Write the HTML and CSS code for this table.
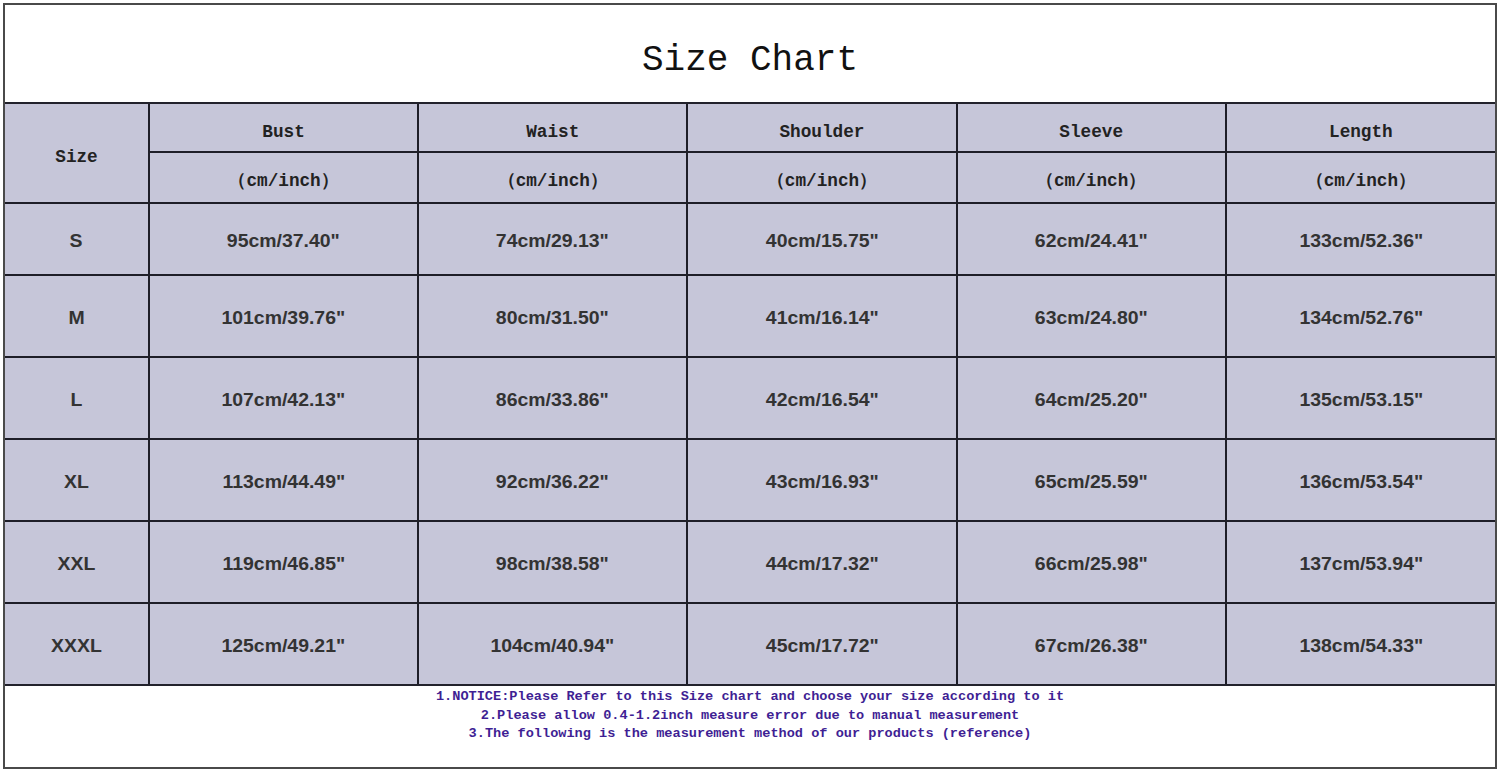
FILE: index.html
```html
<!DOCTYPE html>
<html>
<head>
<meta charset="utf-8">
<link rel="stylesheet" href="styles.css">
</head>
<body>
<div class="sheet">
  <div class="title">Size Chart</div>
  <table class="chart">
    <colgroup>
      <col class="c-size"><col><col><col><col><col>
    </colgroup>
    <thead>
      <tr class="h1">
        <th rowspan="2" class="size-head">Size</th>
        <th>Bust</th><th>Waist</th><th>Shoulder</th><th>Sleeve</th><th>Length</th>
      </tr>
      <tr class="h2">
        <th>（cm/inch）</th><th>（cm/inch）</th><th>（cm/inch）</th><th>（cm/inch）</th><th>（cm/inch）</th>
      </tr>
    </thead>
    <tbody>
      <tr class="r-first"><td><span>S</span></td><td><span>95cm/37.40"</span></td><td><span>74cm/29.13"</span></td><td><span>40cm/15.75"</span></td><td><span>62cm/24.41"</span></td><td><span>133cm/52.36"</span></td></tr>
      <tr><td><span>M</span></td><td><span>101cm/39.76"</span></td><td><span>80cm/31.50"</span></td><td><span>41cm/16.14"</span></td><td><span>63cm/24.80"</span></td><td><span>134cm/52.76"</span></td></tr>
      <tr><td><span>L</span></td><td><span>107cm/42.13"</span></td><td><span>86cm/33.86"</span></td><td><span>42cm/16.54"</span></td><td><span>64cm/25.20"</span></td><td><span>135cm/53.15"</span></td></tr>
      <tr><td><span>XL</span></td><td><span>113cm/44.49"</span></td><td><span>92cm/36.22"</span></td><td><span>43cm/16.93"</span></td><td><span>65cm/25.59"</span></td><td><span>136cm/53.54"</span></td></tr>
      <tr><td><span>XXL</span></td><td><span>119cm/46.85"</span></td><td><span>98cm/38.58"</span></td><td><span>44cm/17.32"</span></td><td><span>66cm/25.98"</span></td><td><span>137cm/53.94"</span></td></tr>
      <tr><td><span>XXXL</span></td><td><span>125cm/49.21"</span></td><td><span>104cm/40.94"</span></td><td><span>45cm/17.72"</span></td><td><span>67cm/26.38"</span></td><td><span>138cm/54.33"</span></td></tr>
    </tbody>
  </table>
  <div class="notes">
    <p>1.NOTICE:Please Refer to this Size chart and choose your size according to it</p>
    <p>2.Please allow 0.4-1.2inch measure error due to manual measurement</p>
    <p>3.The following is the measurement method of our products (reference)</p>
  </div>
</div>
</body>
</html>
```

FILE: styles.css
```css
html, body {
  margin: 0;
  padding: 0;
  background: #ffffff;
}

.sheet {
  margin: 3px 0 0 3px;
  width: 1494px;
  height: 766px;
  box-sizing: border-box;
  border: 2px solid #4a4a4a;
  display: flex;
  flex-direction: column;
  background: #ffffff;
}

.title {
  height: 99px;
  box-sizing: border-box;
  padding-top: 13px;
  display: flex;
  align-items: center;
  justify-content: center;
  font-family: "Liberation Mono", "DejaVu Sans Mono", monospace;
  font-size: 36px;
  color: #111111;
  border-bottom: 2px solid #22222c;
}

.chart {
  width: 100%;
  border-collapse: collapse;
  border-style: hidden;
  table-layout: fixed;
  background: #c6c6d9;
}

.chart .c-size {
  width: 144px;
}

.chart th,
.chart td {
  border: 2px solid #1e1e28;
  text-align: center;
  vertical-align: middle;
  padding: 0;
}

.chart th {
  font-family: "Liberation Mono", "DejaVu Sans Mono", monospace;
  font-weight: bold;
  font-size: 17.7px;
  color: #222222;
}

.chart .h1 th {
  height: 48px;
  padding-top: 8px;
  box-sizing: border-box;
}

.chart .h2 th {
  height: 51px;
  padding-top: 5px;
  box-sizing: border-box;
}

.chart .size-head {
  padding-top: 8px;
}

.chart td {
  height: 76px;
  padding-top: 4px;
  font-family: "Liberation Sans", Arial, sans-serif;
  font-weight: bold;
  font-size: 18px;
  color: #333333;
}

.chart .r-first td {
  height: 66px;
}

.chart td span {
  display: inline-block;
  transform: scaleX(1.08);
}

.notes {
  flex: 1;
  border-top: 2px solid #22222c;
  padding-top: 2px;
  font-family: "Liberation Mono", "DejaVu Sans Mono", monospace;
  font-weight: bold;
  font-size: 13.6px;
  color: #3f1f94;
  text-align: center;
}

.notes p {
  margin: 0;
  line-height: 18.5px;
}
```
